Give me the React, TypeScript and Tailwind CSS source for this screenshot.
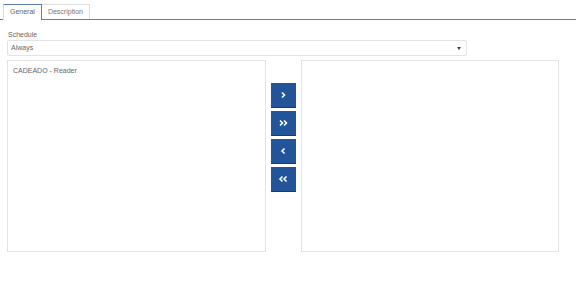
const buttons = ["›", "»", "‹", "«"];

const Chevron = ({ dir, double }: { dir: "right" | "left"; double?: boolean }) => {
  const one = dir === "right" ? "M2 1.5 L4.5 4 L2 6.5" : "M4.5 1.5 L2 4 L4.5 6.5";
  const two = dir === "right" ? "M6 1.5 L8.5 4 L6 6.5" : "M8.5 1.5 L6 4 L8.5 6.5";
  return (
    <svg width={double ? 11 : 7} height={8} viewBox={double ? "0 0 11 8" : "0 0 7 8"} fill="none">
      <path d={one} stroke="white" strokeWidth={1.6} />
      {double && <path d={two} stroke="white" strokeWidth={1.6} />}
    </svg>
  );
};

const App = () => {
  return (
    <div className="w-[576px] h-[293px] bg-white text-[7px] text-[#666] font-['Liberation_Sans',Arial,sans-serif]">
      <div className="pt-[4px] pl-[3px] flex border-b border-[#5b7fb5]">
        <div className="h-[16px] px-[6px] flex items-center border border-b-0 border-[#5b7fb5] border-l-[#ddd] bg-white -mb-px text-[#666]">
          General
        </div>
        <div className="h-[15px] px-[6px] flex items-center border border-l-0 border-b-0 border-[#ddd] text-[#777]">
          Description
        </div>
      </div>

      <div className="pl-[7px] pt-[10px]">
        <div className="h-[9px] leading-[9px] pl-px text-[#666]">Schedule</div>
        <div className="w-[460px] h-[16px] border border-[#e3e3e3] rounded-[2px] flex items-center justify-between pl-[3px] pr-[5px] mt-px">
          <span>Always</span>
          <svg width="4" height="3" viewBox="0 0 4 3">
            <path d="M0 0 H4 L2 3 Z" fill="#444" />
          </svg>
        </div>

        <div className="flex mt-[4px]">
          <div className="w-[259px] h-[192px] border border-[#e3e3e3] pl-[5px] pt-[5px]">
            CADEADO - Reader
          </div>
          <div className="w-[35px] flex flex-col items-start pl-[5px] gap-[4px] pt-[23px]">
            {buttons.map((b, i) => (
              <button
                key={b}
                className="w-[25px] h-[24px] bg-[#22549a] shadow-[0_1px_0_#163b70] flex items-center justify-center"
              >
                <Chevron dir={i < 2 ? "right" : "left"} double={i % 2 === 1} />
              </button>
            ))}
          </div>
          <div className="w-[258px] h-[192px] border border-[#e3e3e3]" />
        </div>
      </div>
    </div>
  );
};

export default App;
